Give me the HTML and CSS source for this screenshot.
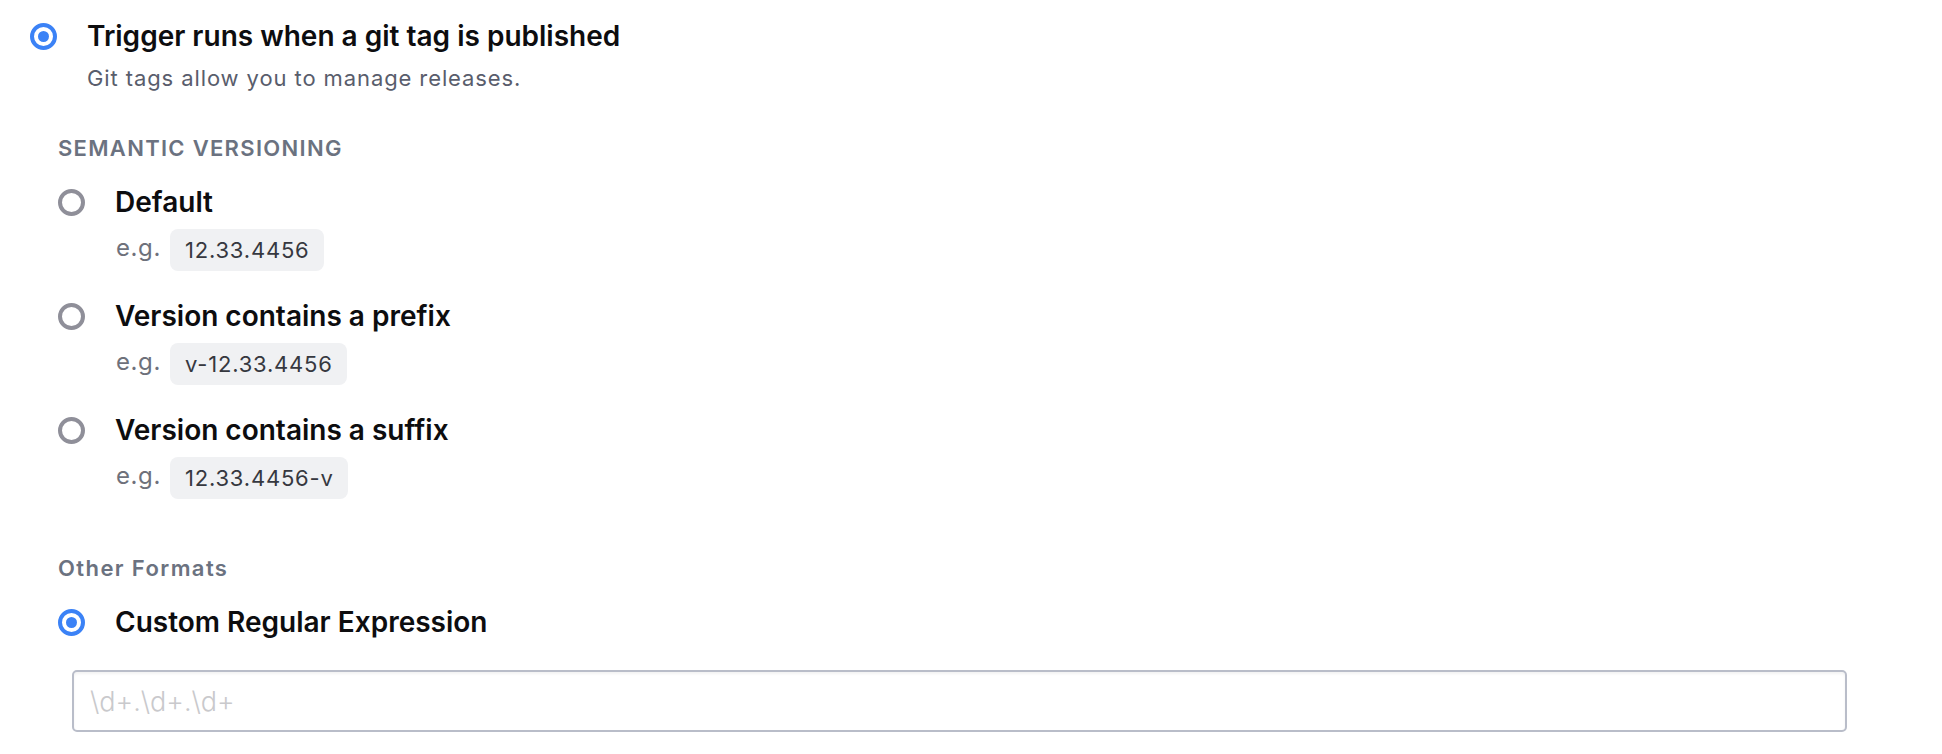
FILE: index.html
```html
<!DOCTYPE html>
<html lang="en">
<head>
    <meta charset="UTF-8">
    <meta name="viewport" content="width=device-width, initial-scale=1.0">
    <title>Tag Trigger Settings</title>
    <link rel="stylesheet" href="styles.css">
</head>
<body>
    <div class="trigger-settings">
        <div class="option option-main">
            <span class="radio checked"></span>
            <span class="option-title">Trigger runs when a git tag is published</span>
        </div>
        <p class="option-desc">Git tags allow you to manage releases.</p>

        <div class="formats">
            <h4 class="group-label upper">Semantic Versioning</h4>

            <div class="format">
                <div class="option">
                    <span class="radio"></span>
                    <span class="option-title">Default</span>
                </div>
                <div class="example">
                    <span class="example-prefix">e.g.</span>
                    <code class="chip">12.33.4456</code>
                </div>
            </div>

            <div class="format">
                <div class="option">
                    <span class="radio"></span>
                    <span class="option-title">Version contains a prefix</span>
                </div>
                <div class="example">
                    <span class="example-prefix">e.g.</span>
                    <code class="chip">v-12.33.4456</code>
                </div>
            </div>

            <div class="format">
                <div class="option">
                    <span class="radio"></span>
                    <span class="option-title">Version contains a suffix</span>
                </div>
                <div class="example">
                    <span class="example-prefix">e.g.</span>
                    <code class="chip">12.33.4456-v</code>
                </div>
            </div>

            <h4 class="group-label other">Other Formats</h4>

            <div class="option">
                <span class="radio checked"></span>
                <span class="option-title">Custom Regular Expression</span>
            </div>
            <input type="text" class="regex-input" placeholder="\d+.\d+.\d+">
        </div>
    </div>
</body>
</html>
```

FILE: styles.css
```css
body {
    margin: 0;
    font-family: Inter, "Noto Sans", sans-serif;
    background-color: #ffffff;
    color: #0d0d0f;
}
.trigger-settings {
    padding: 19px 95px 0 30px;
}
.option {
    display: flex;
    align-items: center;
    gap: 30px;
    height: 34px;
}
.option-title {
    font-size: 28px;
    line-height: 34px;
    font-weight: 600;
    color: #0d0d0f;
}
.radio {
    width: 27px;
    height: 27px;
    box-sizing: border-box;
    border: 4px solid #8f8f99;
    border-radius: 50%;
    flex-shrink: 0;
    display: flex;
    align-items: center;
    justify-content: center;
}
.radio.checked {
    border-color: #3b82f6;
}
.radio.checked::after {
    content: "";
    width: 11px;
    height: 11px;
    border-radius: 50%;
    background: #3b82f6;
}
.option-desc {
    margin: 11px 0 0 57px;
    font-size: 22px;
    line-height: 28px;
    letter-spacing: 0.9px;
    color: #595d6c;
}
.formats {
    margin-left: 28px;
}
.group-label {
    margin: 42px 0 23px 0;
    font-size: 22px;
    line-height: 28px;
    font-weight: 600;
    color: #6b7280;
}
.group-label.upper {
    text-transform: uppercase;
    letter-spacing: 1.3px;
}
.group-label.other {
    margin-top: 55px;
    margin-bottom: 23px;
    letter-spacing: 1.4px;
}
.format {
    margin-bottom: 28px;
}
.example {
    display: flex;
    align-items: center;
    gap: 9px;
    margin: 10px 0 0 58px;
}
.example-prefix {
    font-size: 24px;
    letter-spacing: 0.6px;
    color: #6e717b;
    margin-top: -6px;
}
.chip {
    font-family: Inter, "Noto Sans", sans-serif;
    font-size: 22px;
    line-height: 28px;
    letter-spacing: 0.8px;
    padding: 7px 14px 7px 15px;
    background: #f0f1f3;
    color: #36383f;
    border-radius: 8px;
}
.regex-input {
    display: block;
    box-sizing: border-box;
    width: calc(100% - 14px);
    height: 62px;
    margin: 31px 0 0 14px;
    padding: 0 16px;
    border: 2px solid #b9bdc9;
    border-radius: 5px;
    box-shadow: inset 0 2px 3px rgba(0,0,0,0.05);
    font-family: Inter, "Noto Sans", sans-serif;
    font-size: 27px;
    font-weight: 300;
    color: #333;
    outline: none;
}
.regex-input::placeholder {
    color: #c9c9cc;
}
```
